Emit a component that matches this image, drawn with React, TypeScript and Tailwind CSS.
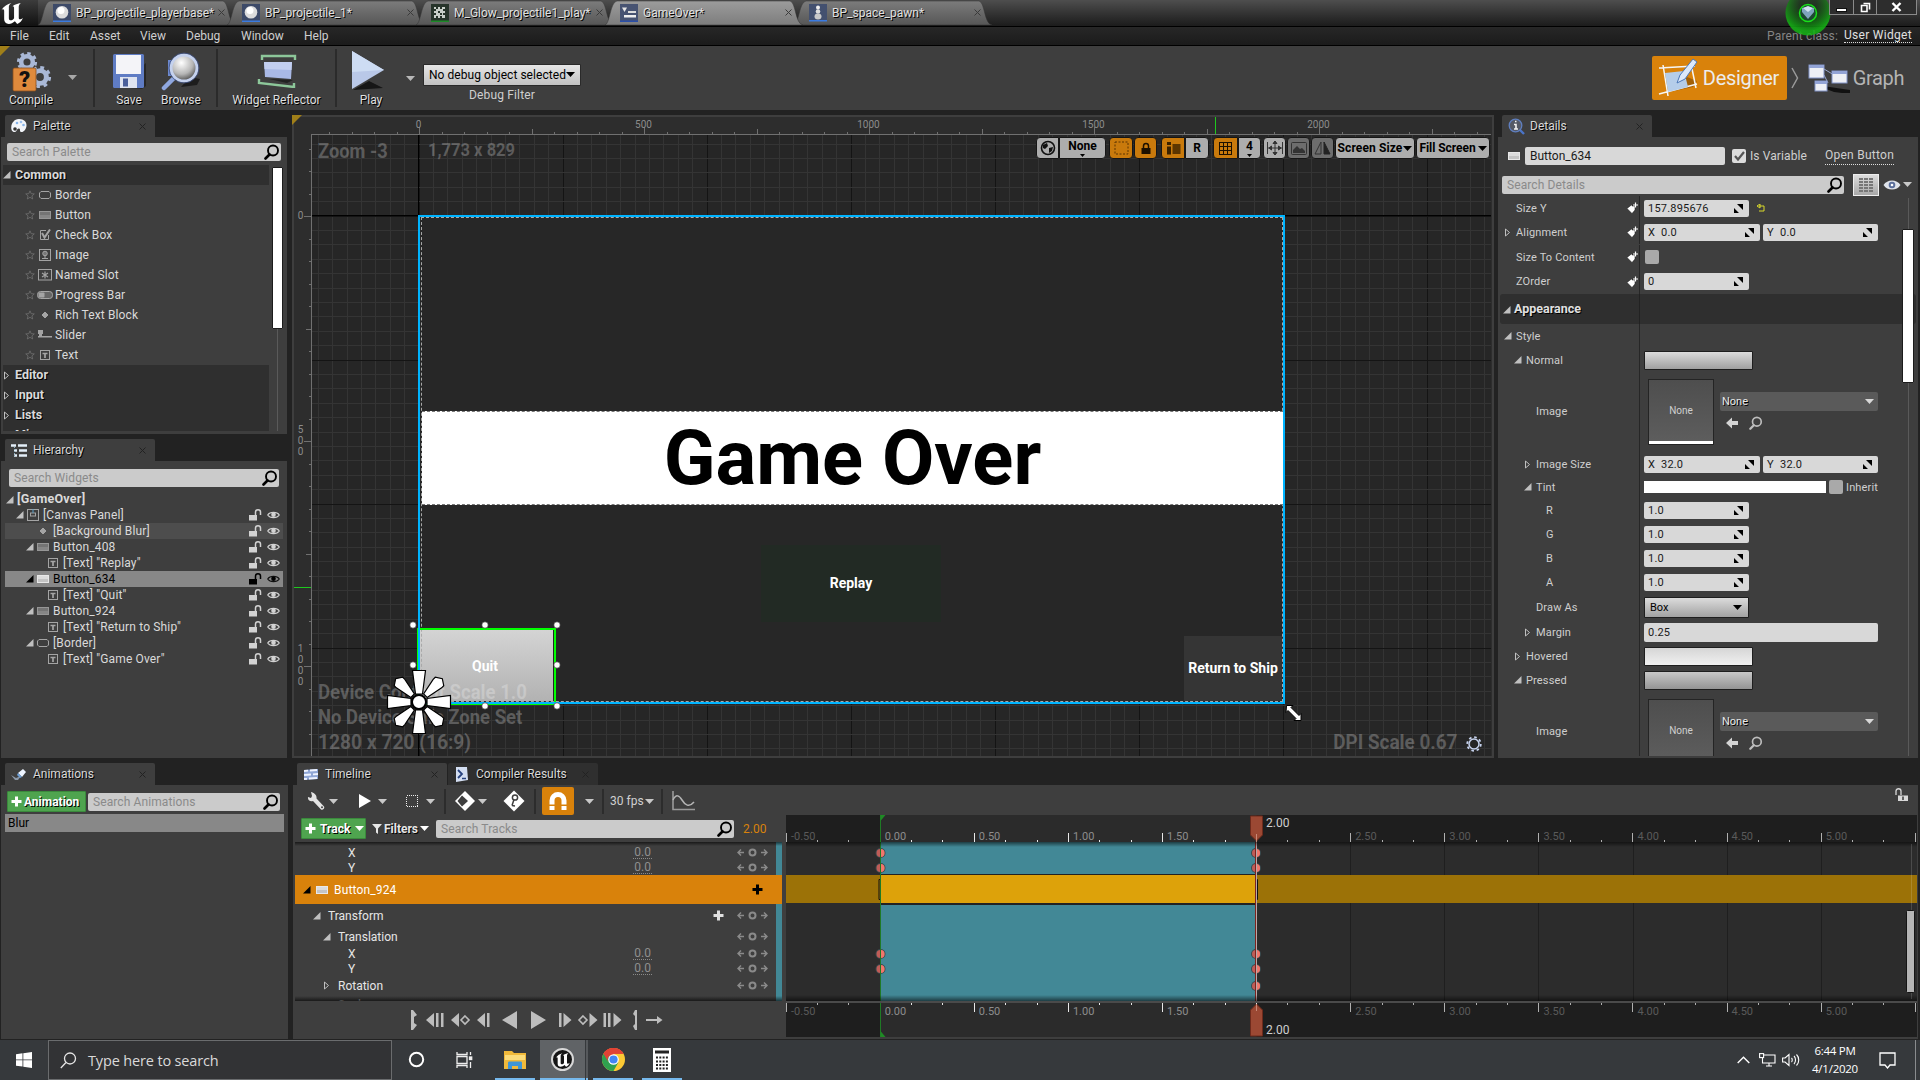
import React from "react";

const SHADOW = "[text-shadow:1px_1px_0_#000]";

function Caret({ className = "text-[#c8c8c8]" }: { className?: string }) {
  return (
    <svg width="9" height="5" viewBox="0 0 9 5" className={"shrink-0 " + className}>
      <path d="M0 0h9L4.5 5z" fill="currentColor" />
    </svg>
  );
}

function Expander({ open, className = "text-[#c0c0c0]" }: { open: boolean; className?: string }) {
  return open ? (
    <svg width="8" height="8" viewBox="0 0 8 8" className={"shrink-0 " + className}>
      <path d="M7.5 0v7.5H0z" fill="currentColor" />
    </svg>
  ) : (
    <svg width="8" height="9" viewBox="0 0 8 9" className={"shrink-0 " + className}>
      <path d="M1.5 1v7L5.500 4.500z" fill="none" stroke="currentColor" />
    </svg>
  );
}

function Magnifier({ size = 16, color = "#000" }: { size?: number; color?: string }) {
  return (
    <svg width={size} height={size} viewBox="0 0 16 16" className="shrink-0">
      <circle cx="9" cy="6.500" r="5" fill="none" stroke={color} strokeWidth="1.900" />
      <path d="M5.500 10.500L1.500 14.500" stroke={color} strokeWidth="2.600" strokeLinecap="round" />
    </svg>
  );
}

function SearchBox({ text, className }: { text: string; className: string }) {
  return (
    <div className={"flex h-[18px] items-center justify-between rounded-[2px] bg-[#cbcbcb] pl-[5px] pr-px text-[12px] leading-none text-[#8a8a8a] " + className}>
      <span className="tracking-[0.1px]">{text}</span>
      <Magnifier />
    </div>
  );
}

function PanelTab({ icon, label, width = "w-[150px]", bg = "bg-[#3e3e3e]" }: { icon: React.ReactNode; label: string; width?: string; bg?: string }) {
  return (
    <div className={"flex h-[22px] items-center rounded-t-[2px] pl-[6px] pr-[9px] text-[12px] leading-none text-[#d8d8d8] " + width + " " + bg}>
      <span className="flex w-[22px] items-center">{icon}</span>
      <span className={"flex-1 " + SHADOW}>{label}</span>
      <svg width="7" height="7" viewBox="0 0 7 7">
        <path d="M.5.5l6 6M6.500.5l-6 6" stroke="#222" />
      </svg>
    </div>
  );
}

/* ---------- widget type glyphs ---------- */

function WidgetGlyph({ kind, light = false }: { kind: string; light?: boolean }) {
  const c = "#a4a4a4";
  const box = (child: React.ReactNode) => (
    <svg width="16" height="12" viewBox="0 0 16 12" className="shrink-0">
      {child}
    </svg>
  );
  switch (kind) {
    case "border":
      return box(<path d="M4 2.500h8l1.500 1.500v4L12 9.500H4L2.500 8V4z" fill="none" stroke={c} />);
    case "button":
      return box(
        <>
          <rect x="2.500" y="2.500" width="11" height="7" fill={light ? "#c4c4c4" : "#868686"} stroke={light ? "#e8e8e8" : "#969696"} />
          <rect x="3" y="3" width="10" height="3" fill={light ? "#dcdcdc" : "#747474"} />
        </>
      );
    case "check":
      return box(
        <>
          <path d="M9 1.500H3.500v9h8V6" fill="none" stroke={c} />
          <path d="M5 4l2.500 4.500L13 0.500" fill="none" stroke={c} strokeWidth="2" />
        </>
      );
    case "image":
      return box(
        <>
          <rect x="2.500" y="0.500" width="11" height="11" fill="none" stroke={c} />
          <circle cx="8" cy="4.500" r="2.300" fill="#777" stroke={c} />
          <path d="M8 6v3M5 9.500h6" stroke={c} />
        </>
      );
    case "slot":
      return box(
        <>
          <rect x="1.500" y="0.500" width="13" height="10.500" fill="none" stroke={c} />
          <path d="M8 2.500v7M5 4l6 4M11 4l-6 4" stroke={c} strokeWidth="1.200" />
        </>
      );
    case "progress":
      return box(
        <>
          <rect x="0.500" y="2.500" width="15" height="7" rx="3" fill="#666" stroke={c} />
          <rect x="1.500" y="3.500" width="6" height="5" rx="1" fill={c} />
        </>
      );
    case "dot":
      return box(<path d="M7 3h2v1h1v1h1v2h-1v1H9v1H7V8H6V7H5V5h1V4h1z" fill={c} />);
    case "slider":
      return box(<path d="M1 1h5v4H5v2h10v1.500H1V7h1V5H1z" fill={c} />);
    case "canvas":
      return box(
        <>
          <rect x="2.500" y="0.500" width="11" height="11" fill="none" stroke={c} />
          <rect x="5.500" y="4" width="5" height="3" fill="none" stroke={c} />
          <path d="M8 0v4" stroke="#5aa0c8" />
        </>
      );
    default:
      return box(
        <>
          <rect x="3.500" y="1.500" width="9" height="9" fill="none" stroke={c} />
          <path d="M5.500 4.500h5M8 4.500v4.500" stroke={c} strokeWidth="1.700" />
        </>
      );
  }
}

/* ---------- title bar ---------- */

function BlueprintIcon() {
  return (
    <svg width="18" height="18" viewBox="0 0 18 18" className="shrink-0">
      <rect width="18" height="17" fill="#3d4a68" />
      <circle cx="9" cy="8.300" r="6.300" fill="#dcdcdc" />
      <circle cx="8" cy="6.500" r="3.500" fill="#fff" />
      <rect y="16.500" width="18" height="1.500" fill="#3b7be0" />
    </svg>
  );
}

function MaterialIcon() {
  return (
    <svg width="18" height="18" viewBox="0 0 18 18" className="shrink-0">
      <rect width="18" height="17" fill="#27342a" />
      <path d="M3 3h2v2h2V3h2v2h2V3h3v2h-2v2h2v2h-2v2h2v3h-3v-2H9v2H7v-2H5v2H3v-3h2V9H3V7h2V5H3zM7 7v2h2V7zm2 2v2h2V9z" fill="#c9cfc9" />
      <rect y="16.500" width="18" height="1.500" fill="#1d8a28" />
    </svg>
  );
}

function WidgetIcon() {
  return (
    <svg width="18" height="18" viewBox="0 0 18 18" className="shrink-0">
      <rect width="18" height="17" fill="#475372" />
      <path d="M2 3.500h5L4.500 8z" fill="#e5e5e5" />
      <rect x="8" y="7" width="8" height="2" fill="#ddd" />
      <rect x="4" y="11" width="12" height="2.500" fill="#eee" />
      <rect y="16.500" width="18" height="1.500" fill="#2b4fa8" />
    </svg>
  );
}

function PawnIcon() {
  return (
    <svg width="18" height="18" viewBox="0 0 18 18" className="shrink-0">
      <rect width="18" height="17" fill="#43506f" />
      <circle cx="9" cy="3.500" r="2" fill="#eee" />
      <circle cx="9" cy="7.500" r="2.300" fill="#ddd" />
      <ellipse cx="9" cy="12.500" rx="3.500" ry="3" fill="#c9c9c9" />
      <rect y="16" width="18" height="1.500" fill="#3b7be0" />
    </svg>
  );
}

function EditorTab({ icon, label, active, first }: { icon: React.ReactNode; label: string; active?: boolean; first?: boolean }) {
  return (
    <div className={"relative h-[25px] w-[198px] shrink-0 " + (first ? "" : "-ml-[9px] ") + (active ? "z-[5]" : "z-[1]")}>
      <svg className="absolute inset-0" width="198" height="25">
        <defs>
          <linearGradient id={active ? "tabA" : "tabN"} x1="0" y1="0" x2="0" y2="1">
            <stop offset="0" stopColor={active ? "#9c9c9c" : "#7c7c7c"} />
            <stop offset="1" stopColor={active ? "#7d7d7d" : "#565656"} />
          </linearGradient>
        </defs>
        <path
          d="M0 25C5 24 5 2 12 1H185C191 2 190 24 198 25z"
          fill={active ? "url(#tabA)" : "url(#tabN)"}
          stroke="#333"
          strokeWidth="0.500"
        />
      </svg>
      <div className="relative flex h-full items-center pl-[15px] pr-[11px] text-[12px] leading-none text-[#e0e0e0]">
        {icon}
        <span className={"ml-[5px] flex-1 whitespace-nowrap " + SHADOW}>{label}</span>
        <svg width="7" height="7" viewBox="0 0 7 7" className="shrink-0">
          <path d="M.5.5l6 6M6.500.5l-6 6" stroke="#3a3a3a" />
        </svg>
      </div>
    </div>
  );
}

function UnrealU({ size }: { size: number }) {
  return (
    <svg width={size} height={size} viewBox="0 0 24 24">
      <path
        d="M1 9C4 5 7 3 11 2 9 3.500 8.500 4.500 8.500 6v10.500c0 1.500 1 2 2 2s2.500-1 3-2V6.500c0-1-.5-1.500-1.500-1.500C14 3.500 17 2.500 20 2c-1.500 1.500-2 2.500-2 4v10c0 1 .5 1.500 1.200 1.500.8 0 1.800-.6 2.800-1.500-1 3-3 5-5.500 6l-2.200-2.500C12.500 21 10.500 22 8.500 22 5.500 22 4 20 4 17.500V9.500C4 8.500 3.500 8 2.800 8 2.200 8 1.600 8.300 1 9z"
        fill="#fff"
      />
    </svg>
  );
}

function TitleBar() {
  return (
    <header className="relative flex h-[26px] shrink-0 bg-linear-to-b from-[#4e4e4e] to-[#1c1c1c]">
      <div className="w-[38px] bg-linear-to-b from-[#3c3c3c] to-[#111] pt-[1px]">
        <UnrealU size={25} />
      </div>
      <EditorTab first icon={<BlueprintIcon />} label="BP_projectile_playerbase*" />
      <EditorTab icon={<BlueprintIcon />} label="BP_projectile_1*" />
      <EditorTab icon={<MaterialIcon />} label="M_Glow_projectile1_play*" />
      <EditorTab icon={<WidgetIcon />} label="GameOver*" active />
      <EditorTab icon={<PawnIcon />} label="BP_space_pawn*" />
      <div className="flex-1" />
      <svg width="46" height="44" viewBox="0 0 46 44" className="absolute left-[1785px] top-0 z-10">
        <defs>
          <radialGradient id="glow" cx="0.500" cy="0.300" r="0.600">
            <stop offset="0.300" stopColor="#0a2a0a" stopOpacity="0.600" />
            <stop offset="1" stopColor="#14b414" stopOpacity="0.850" />
          </radialGradient>
        </defs>
        <ellipse cx="23" cy="13" rx="22.500" ry="22.500" fill="url(#glow)" />
        <circle cx="23" cy="13" r="8.500" fill="#1c4a30" stroke="#18e018" strokeWidth="1.500" />
        <path d="M17 8l6-1 6 1v4l-6 7-6-7z" fill="#7fa3bd" />
        <path d="M18 8l5 4 5-4-5-2z" fill="#cfe0ee" />
      </svg>
      <div className="z-10 mr-[3px] flex h-[15px] text-white">
        <div className="flex w-[25px] items-end justify-center border border-t-0 border-[#8a8a8a] bg-[#2d2d2d] pb-[2px]">
          <div className="h-[4px] w-[11px] border border-[#111] bg-white" />
        </div>
        <div className="flex w-[23px] items-center justify-center border-b border-r border-[#8a8a8a] bg-[#2d2d2d]">
          <svg width="11" height="11" viewBox="0 0 11 11">
            <path d="M3.500 1.500h6v6M1.500 3.500h5.500v6H1.500z" fill="none" stroke="#fff" strokeWidth="1.600" />
          </svg>
        </div>
        <div className="flex w-[40px] items-center justify-center border-b border-r border-[#8a8a8a] bg-[#2d2d2d]">
          <svg width="11" height="10" viewBox="0 0 11 10">
            <path d="M1.500 1l8 8M9.500 1l-8 8" stroke="#fff" strokeWidth="2.400" />
          </svg>
        </div>
      </div>
    </header>
  );
}

function MenuBar() {
  return (
    <nav className="flex h-[20px] shrink-0 items-center border-y border-black bg-linear-to-b from-[#272727] to-[#1b1b1b] pl-[10px] pr-[8px] text-[12px] leading-none text-[#cfcfcf]">
      <span className="w-[39px]">File</span>
      <span className="w-[41px]">Edit</span>
      <span className="w-[50px]">Asset</span>
      <span className="w-[46px]">View</span>
      <span className="w-[55px]">Debug</span>
      <span className="w-[63px]">Window</span>
      <span>Help</span>
      <div className="flex-1" />
      <span className="mr-[6px] tracking-[0.150px] text-[#858585]">Parent class:</span>
      <span className="border-b border-dotted border-[#ddd] pb-px tracking-[0.300px] text-[#e0e0e0]">User Widget</span>
    </nav>
  );
}

/* ---------- toolbar ---------- */

function ToolButton({ label, width, children }: { label: string; width: string; children: React.ReactNode }) {
  return (
    <div className={"flex flex-col items-center " + width}>
      <div className="flex h-[42px] items-center">{children}</div>
      <span className={"mt-[1px] whitespace-nowrap text-[12px] leading-[14px] text-[#dedede] " + SHADOW}>{label}</span>
    </div>
  );
}

function Divider() {
  return <div className="h-[58px] w-[2px] bg-[#2b2b2b]" />;
}

function Gear({ cx, cy, r }: { cx: number; cy: number; r: number }) {
  return (
    <g transform={`translate(${cx} ${cy})`}>
      <circle r={r * 0.58} fill="none" stroke="#a9b8d6" strokeWidth={r * 0.45} />
      <circle r={r * 0.86} fill="none" stroke="#a9b8d6" strokeWidth={r * 0.3} strokeDasharray={`${r * 0.34} ${r * 0.335}`} />
    </g>
  );
}

function Toolbar() {
  return (
    <div className="flex h-[64px] shrink-0 items-center bg-[#3e3e3e]">
      <div className="relative flex h-full items-center">
        <svg width="10" height="10" className="absolute left-0 top-0">
          <path d="M0 0h10L0 10z" fill="#a07f19" />
        </svg>
        <ToolButton label="Compile" width="w-[62px]">
          <svg width="42" height="42" viewBox="0 0 42 42">
            <Gear cx={17} cy={12} r={10} />
            <Gear cx={30} cy={27} r={11} />
            <rect x="3" y="18" width="23" height="23" rx="1.500" fill="#df8a3c" stroke="#8a4f1c" strokeWidth="0.800" />
            <text x="14.500" y="37" textAnchor="middle" fontFamily="Roboto" fontWeight="900" fontSize="22" fill="#111">?</text>
          </svg>
        </ToolButton>
        <div className="flex w-[31px] pb-0.5 pl-[6px]">
          <Caret className="text-[#a8a8a8]" />
        </div>
        <Divider />
        <ToolButton label="Save" width="ml-[8px] w-[52px]">
          <svg width="38" height="40" viewBox="0 0 38 40">
            <path d="M6 36l26 2 4-3V12z" fill="#222" opacity="0.800" />
            <rect x="3" y="3" width="31" height="34" rx="1.500" fill="#5f7cc4" />
            <rect x="6" y="4" width="25" height="19" fill="#f4f4f8" />
            <rect x="10" y="26" width="17" height="11" fill="#dfe4f0" />
            <rect x="13" y="27.500" width="5" height="8" fill="#4a5f9a" />
          </svg>
        </ToolButton>
        <ToolButton label="Browse" width="w-[52px]">
          <svg width="40" height="40" viewBox="0 0 40 40">
            <defs>
              <radialGradient id="lens" cx="0.400" cy="0.300" r="0.800">
                <stop offset="0" stopColor="#fff" />
                <stop offset="0.550" stopColor="#b5b5b5" />
                <stop offset="1" stopColor="#2c2c2c" />
              </radialGradient>
            </defs>
            <path d="M20 36l16-2 3-6-10-2z" fill="#1d1d1d" />
            <path d="M14 26L3 37" stroke="#8fa7df" strokeWidth="4.500" strokeLinecap="round" />
            <rect x="7" y="9" width="5" height="16" fill="#6d89cf" />
            <circle cx="23" cy="17" r="13" fill="url(#lens)" stroke="#c5d2ee" strokeWidth="3" />
            <circle cx="23" cy="17" r="15" fill="none" stroke="#3d4f80" strokeWidth="0.800" />
          </svg>
        </ToolButton>
        <div className="ml-[9px]"><Divider /></div>
        <ToolButton label="Widget Reflector" width="w-[117px]">
          <svg width="40" height="34" viewBox="0 0 40 34">
            <path d="M5 6V2h33v4" fill="none" stroke="#8dc79a" strokeWidth="2.400" />
            <path d="M7 8h28l-1 17-26-2z" fill="#a9b9e6" />
            <path d="M7 8h28l-.5 8L7.500 15z" fill="#c3cff0" />
            <path d="M2 25v4l35 4v-4" fill="none" stroke="#8dc79a" strokeWidth="2.400" />
            <path d="M12 25l24 1-6 3z" fill="#222" />
          </svg>
        </ToolButton>
        <Divider />
        <ToolButton label="Play" width="w-[68px]">
          <svg width="40" height="42" viewBox="0 0 40 42" className="-ml-[6px]">
            <path d="M5 40l16-9 14 7z" fill="#161616" />
            <path d="M4 1l32 19L4 39z" fill="#b9c8e8" />
            <path d="M4 1l32 19-32 2z" fill="#cddcf3" />
          </svg>
        </ToolButton>
        <div className="flex w-[10px] justify-center">
          <Caret className="text-[#b8b8b8]" />
        </div>
        <div className="ml-[8px] mt-[9px] flex w-[158px] flex-col items-center">
          <div className="flex h-[22px] w-full items-center justify-between rounded-[1px] border border-[#2a2a2a] bg-linear-to-b from-[#e6e6e6] to-[#c2c2c2] px-[5px] text-[12px] leading-none text-black">
            <span className="tracking-[0.050px]">No debug object selected</span>
            <Caret className="text-black" />
          </div>
          <span className="mt-[2px] text-[12px] leading-[14px] tracking-[0.150px] text-[#cfcfcf]">Debug Filter</span>
        </div>
      </div>
      <div className="flex-1" />
      <div className="flex h-[44px] w-[135px] items-center rounded-[2px] bg-[#d9820b] pl-[5px]">
        <svg width="42" height="42" viewBox="0 0 42 42" className="mr-[4px]">
          <path d="M12 35l24-5 4-6-10-4z" fill="#8a5208" opacity="0.700" />
          <path d="M2 11l36-2M6 8l5 31M2 37l38-10M34 7l5 24" stroke="#f6f6f6" strokeWidth="1.500" fill="none" />
          <path d="M8 16l19-2 4 16-20 5z" fill="#b5cdea" />
          <path d="M20 26l3-8L36 2l4 3-12 17z" fill="#dce8fa" stroke="#4b77b8" />
        </svg>
        <span className="text-[20px] leading-none tracking-[-0.300px] text-[#ececec]">Designer</span>
      </div>
      <svg width="9" height="22" viewBox="0 0 9 22" className="ml-[4px]">
        <path d="M1 1l5.500 10L1 21" fill="none" stroke="#9a9a9a" strokeWidth="1.500" />
      </svg>
      <svg width="42" height="30" viewBox="0 0 42 30" className="ml-[8px]">
        <path d="M8 22l34 5v4l-16-2z" fill="#111" />
        <path d="M16 6l10 6M16 12l4 8" stroke="#9aa8cf" />
        <rect x="1" y="2" width="15" height="13" fill="#eef0f5" stroke="#8294c8" />
        <rect x="1" y="2" width="15" height="3" fill="#93a4d6" />
        <rect x="24" y="8" width="15" height="12" fill="#eef0f5" stroke="#8294c8" />
        <rect x="24" y="8" width="15" height="3" fill="#93a4d6" />
        <rect x="7" y="18" width="12" height="10" fill="#eef0f5" stroke="#8294c8" />
        <rect x="7" y="18" width="12" height="3" fill="#93a4d6" />
      </svg>
      <span className="ml-[3px] mr-[16px] text-[20px] leading-none tracking-[-0.400px] text-[#b4b4b4]">Graph</span>
    </div>
  );
}

/* ---------- left column ---------- */

const PALETTE: [string, string][] = [
  ["border", "Border"],
  ["button", "Button"],
  ["check", "Check Box"],
  ["image", "Image"],
  ["slot", "Named Slot"],
  ["progress", "Progress Bar"],
  ["dot", "Rich Text Block"],
  ["slider", "Slider"],
  ["text", "Text"],
];

function PalettePanel() {
  return (
    <section>
      <div className="pl-[4px]">
        <PanelTab
          label="Palette"
          icon={
            <svg width="16" height="14" viewBox="0 0 16 14">
              <path d="M8 0c5 0 8 3 7.500 7S12 13.500 10 13c-2-.4 0-3-2-3.500S6 13 3.500 13 0 10.500.3 7.500 3 0 8 0z" fill="#f2f5fa" />
              <circle cx="6" cy="4" r="1.300" fill="#86b4ea" />
              <circle cx="10" cy="3" r="1.300" fill="#9cc0ee" />
              <circle cx="12.500" cy="6" r="1.300" fill="#86b4ea" />
              <circle cx="4" cy="10" r="1.800" fill="#333" />
            </svg>
          }
        />
      </div>
      <div className="h-[297px] bg-[#3e3e3e] pt-[6px]">
        <SearchBox text="Search Palette" className="ml-[6px] w-[274px]" />
        <div className="mt-[4px] flex h-[266px] overflow-hidden pl-[2px]">
          <div className="w-[266px] text-[12px] leading-none text-[#dadada]">
            <div className={"flex h-[20px] items-center gap-[4px] bg-[#2f2f2f] text-[12.500px] font-bold " + SHADOW}>
              <Expander open />
              Common
            </div>
            {PALETTE.map(([k, t]) => (
              <div key={t} className="flex h-[20px] items-center pl-[22px]">
                <svg width="10" height="10" viewBox="0 0 10 10" className="mr-[2px]">
                  <path d="M5 .8l1.200 2.900 3.100.2-2.400 2 .8 3.100L5 7.300 2.300 9l.8-3.100-2.400-2 3.100-.2z" fill="none" stroke="#6b6b6b" strokeWidth="0.900" />
                </svg>
                <WidgetGlyph kind={k} />
                <span className="ml-[2px] tracking-[0.120px]">{t}</span>
              </div>
            ))}
            {["Editor", "Input", "Lists", "Misc"].map((t) => (
              <div key={t} className={"flex h-[20px] items-center gap-[4px] bg-[#2f2f2f] text-[12.500px] font-bold " + SHADOW}>
                <Expander open={false} />
                {t}
              </div>
            ))}
          </div>
          <div className="ml-[2px] mt-[2px] flex w-[12px] flex-col items-center">
            <div className="h-[162px] w-[11px] shrink-0 rounded-[1px] border border-[#1c1c1c] bg-white" />
            <div className="w-px flex-1 bg-[#5a5a5a]" />
          </div>
        </div>
      </div>
    </section>
  );
}

type TreeRow = { t: string; k: string; indent: string; exp?: boolean; bg?: string; sel?: boolean };

const TREE: TreeRow[] = [
  { t: "[Canvas Panel]", k: "canvas", indent: "pl-[11px]", exp: true },
  { t: "[Background Blur]", k: "dot", indent: "pl-[21px]", bg: "bg-[#4d4d4d]" },
  { t: "Button_408", k: "button", indent: "pl-[21px]", exp: true },
  { t: "[Text] \"Replay\"", k: "text", indent: "pl-[31px]" },
  { t: "Button_634", k: "button", indent: "pl-[21px]", exp: true, bg: "bg-[#888]", sel: true },
  { t: "[Text] \"Quit\"", k: "text", indent: "pl-[31px]" },
  { t: "Button_924", k: "button", indent: "pl-[21px]", exp: true },
  { t: "[Text] \"Return to Ship\"", k: "text", indent: "pl-[31px]" },
  { t: "[Border]", k: "border", indent: "pl-[21px]", exp: true },
  { t: "[Text] \"Game Over\"", k: "text", indent: "pl-[31px]" },
];

function HierarchyPanel() {
  return (
    <section className="mt-[5px]">
      <div className="pl-[4px]">
        <PanelTab
          label="Hierarchy"
          icon={
            <svg width="16" height="13" viewBox="0 0 16 13">
              <path d="M0 1.500h5M7 1.500h9M3 6.500h3M8 6.500h8M3 11.500h3M8 11.500h8" stroke="#e3eef8" strokeWidth="2.400" />
              <path d="M3.500 3v10" stroke="#8ab" strokeDasharray="1 1" />
            </svg>
          }
        />
      </div>
      <div className="h-[297px] bg-[#3e3e3e] pt-[8px]">
        <SearchBox text="Search Widgets" className="ml-[8px] w-[270px]" />
        <div className="ml-[4px] mt-[4px] w-[278px] text-[12px] leading-none text-[#dadada]">
          <div className="flex h-[16px] items-center pl-px pt-[1px] text-[12.500px] font-bold">
            <Expander open />
            <span className="ml-[3px] tracking-[0.250px]">[GameOver]</span>
          </div>
          {TREE.map((r) => (
            <div key={r.t} className={"flex h-[16px] items-center pr-[3px] " + r.indent + " " + (r.bg ?? "") + " " + (r.sel ? "text-black" : "")}>
              <span className="flex w-[9px]">{r.exp && <Expander open className={r.sel ? "text-black" : "text-[#c0c0c0]"} />}</span>
              <WidgetGlyph kind={r.k} light={r.sel} />
              <span className="ml-[2px] flex-1 whitespace-nowrap tracking-[0.150px]">{r.t}</span>
              <svg width="13" height="12" viewBox="0 0 13 12" className="mr-[5px]">
                <path d="M0 6h8v5.500H0z" fill={r.sel ? "#000" : "#d2d2d2"} />
                <path d="M6.500 6V3c0-3 5-3 5 0v3" fill="none" stroke={r.sel ? "#000" : "#d2d2d2"} strokeWidth="1.500" />
              </svg>
              <svg width="13" height="10" viewBox="0 0 13 10">
                <path d="M.7 5C3 1.500 10 1.500 12.300 5 10 8.500 3 8.500.7 5z" fill="none" stroke={r.sel ? "#111" : "#d2d2d2"} strokeWidth="1.100" />
                <circle cx="6.500" cy="4.800" r="2.300" fill={r.sel ? "#000" : "#d2d2d2"} />
              </svg>
            </div>
          ))}
        </div>
      </div>
    </section>
  );
}

function GreenButton({ label, className, caret }: { label: string; className: string; caret?: boolean }) {
  return (
    <div className={"flex h-[21px] items-center rounded-[1px] border border-[#3a8a3c] bg-[#4fa44f] pl-[3px] text-[12px] font-bold leading-none text-white " + className}>
      <svg width="11" height="11" viewBox="0 0 11 11" className="shrink-0">
        <path d="M4 0.500h3V4h3.500v3H7v3.500H4V7H.5V4H4z" fill="#fff" />
      </svg>
      <span className={"whitespace-nowrap " + (caret ? "ml-[4px] mr-[5px] " : "ml-[2px] ") + SHADOW}>{label}</span>
      {caret && <Caret className="text-white" />}
    </div>
  );
}

function AnimationsPanel() {
  return (
    <section className="mt-[5px]">
      <div className="pl-[4px]">
        <PanelTab
          label="Animations"
          icon={
            <svg width="17" height="13" viewBox="0 0 17 13">
              <path d="M0 7l5 3 5-2-3 4H4z" fill="#8b98a8" />
              <path d="M7 5l5-4 3 3-4 5z" fill="#eef5ff" />
              <path d="M7 5l4 4-2 1-3-3z" fill="#6fa0d8" />
            </svg>
          }
        />
      </div>
      <div className="h-[254px] w-[287px] bg-[#3e3e3e] pl-[6px] pt-[6px]">
        <div className="flex items-center gap-[2px]">
          <GreenButton label="Animation" className="w-[79px]" />
          <SearchBox text="Search Animations" className="w-[192px]" />
        </div>
        <div className="-ml-[2px] mt-[2px] flex h-[18px] w-[279px] items-center bg-[#888] pl-[3px] text-[12px] leading-none text-black">Blur</div>
      </div>
    </section>
  );
}

/* ---------- designer ---------- */

const S = 0.45;
const OX = 107;
const OY = 81;

function range(a: number, b: number) {
  return Array.from({ length: b - a + 1 }, (_, i) => a + i);
}

function Grid() {
  return (
    <svg width="1179" height="621" className="absolute inset-0" shapeRendering="crispEdges">
      <rect width="1179" height="621" fill="#262626" />
      {range(-7, 74).map((i) => {
        const x = Math.floor(OX + i * 14.4);
        return <rect key={i} x={x} y="0" width="1" height="621" fill={i % 10 ? "#343434" : "#141414"} />;
      })}
      {range(-5, 37).map((i) => {
        const y = Math.floor(OY + i * 14.4);
        return <rect key={i} x="0" y={y} width="1179" height="1" fill={i % 10 ? "#343434" : "#141414"} />;
      })}
      <rect x={OX - 1} y="0" width="1" height="621" fill="#000" />
      <rect x="0" y={OY - 1} width="1179" height="1" fill="#000" />
    </svg>
  );
}

function TopRuler() {
  return (
    <svg width="1197" height="18" className="block" shapeRendering="crispEdges" fontFamily="Roboto" fontSize="10">
      <rect width="1197" height="18" fill="#2d2d2d" />
      <rect x="17" y="17" width="1180" height="1" fill="#707070" />
      {range(-4, 47).map((i) => {
        const x = Math.round(125 + i * 22.5);
        const h = i % 10 === 0 ? 7 : i % 5 === 0 ? 5 : 2;
        return x > 18 && <rect key={i} x={x} y={17 - h} width="1" height={h} fill="#707070" />;
      })}
      {[0, 500, 1000, 1500, 2000].map((v) => (
        <text key={v} x={124.5 + v * S} y="11" textAnchor="middle" fill="#8c8c8c">{v}</text>
      ))}
      <rect x="921" y="0" width="1" height="17" fill="#1ec81e" />
    </svg>
  );
}

function LeftRuler() {
  return (
    <svg width="18" height="621" className="block shrink-0" shapeRendering="crispEdges" fontFamily="Roboto" fontSize="10">
      <rect width="18" height="621" fill="#2d2d2d" />
      <rect x="17" y="0" width="1" height="621" fill="#707070" />
      {range(-3, 23).map((i) => {
        const y = Math.round(OY + i * 22.5);
        const h = i % 10 === 0 ? 7 : i % 5 === 0 ? 5 : 2;
        return <rect key={i} x={17 - h} y={y} width={h} height="1" fill="#707070" />;
      })}
      <g fill="#8c8c8c" textAnchor="middle">
        <text x="6.500" y="84">0</text>
        <text x="6.500" y="298">5</text>
        <text x="6.500" y="309">0</text>
        <text x="6.500" y="320">0</text>
        <text x="6.500" y="517">1</text>
        <text x="6.500" y="528">0</text>
        <text x="6.500" y="539">0</text>
        <text x="6.500" y="550">0</text>
      </g>
      <rect x="0" y="452" width="17" height="1" fill="#1ec81e" />
    </svg>
  );
}

function ViewBtn({ children, width, tone }: { children: React.ReactNode; width: string; tone: string }) {
  return (
    <div className={"flex h-[22px] items-center justify-center rounded-[4px] border border-[#161616] text-[12px] font-bold leading-none text-black " + width + " " + tone}>
      {children}
    </div>
  );
}

function ViewToolbar() {
  const gray = "bg-[#adadad]";
  const dim = "bg-[#6d6d6d]";
  const orange = "bg-[#c97a0c]";
  return (
    <div className="absolute right-[1px] top-[2px] flex h-[22px]">
      <ViewBtn width="w-[23px] rounded-r-none" tone={gray}>
        <svg width="16" height="16" viewBox="0 0 16 16">
          <circle cx="8" cy="8" r="6.500" fill="none" stroke="#111" strokeWidth="1.600" />
          <path d="M3 5l4-2 1 3-3 3-2-1zM9 8l4-1-1 4-3 2z" fill="#111" />
        </svg>
      </ViewBtn>
      <ViewBtn width="w-[47px] rounded-l-none flex-col gap-[2px] pt-[1px]" tone={gray}>
        None
        <svg width="5" height="3"><path d="M0 0h5L2.500 3z" /></svg>
      </ViewBtn>
      <ViewBtn width="ml-[3px] w-[24px]" tone={orange}>
        <svg width="15" height="14"><rect x="1" y="1" width="13" height="12" fill="none" stroke="#5c3500" strokeDasharray="2 1.500" /></svg>
      </ViewBtn>
      <ViewBtn width="ml-[1px] w-[23px]" tone={orange}>
        <svg width="12" height="13" viewBox="0 0 12 13">
          <path d="M1.500 6h9v6h-9z" fill="#1c1000" />
          <path d="M3.500 6V4c0-3.500 5-3.500 5 0v2" fill="none" stroke="#1c1000" strokeWidth="1.500" />
        </svg>
      </ViewBtn>
      <ViewBtn width="ml-[4px] w-[24px] rounded-r-none" tone={orange}>
        <svg width="15" height="14" viewBox="0 0 15 14">
          <rect x="1" y="1" width="4" height="3" fill="#3a2200" />
          <rect x="1" y="5.500" width="4" height="8" fill="#3a2200" />
          <rect x="6.500" y="3" width="8" height="10" fill="#5c3500" />
        </svg>
      </ViewBtn>
      <ViewBtn width="w-[24px] rounded-l-none text-[#333]" tone={gray}>R</ViewBtn>
      <ViewBtn width="ml-[4px] w-[25px] rounded-r-none" tone={orange}>
        <svg width="15" height="15" shapeRendering="crispEdges">
          <path d="M1 1.500h13M1 5.500h13M1 9.500h13M1 13.500h13M1.500 1v13M5.500 1v13M9.500 1v13M13.500 1v13" stroke="#1c1000" />
        </svg>
      </ViewBtn>
      <ViewBtn width="w-[23px] rounded-l-none flex-col gap-[2px] pt-[1px]" tone={gray}>
        4
        <svg width="5" height="3"><path d="M0 0h5L2.500 3z" /></svg>
      </ViewBtn>
      <ViewBtn width="ml-[2px] w-[23px]" tone={gray}>
        <svg width="18" height="16" viewBox="0 0 18 16">
          <path d="M9 1v14M2 8h14M9 1L7 3.500h4zM9 15l-2-2.500h4zM1.500 2v12M16.500 2v12M3 8l2.500-2v4zM15 8l-2.500-2v4z" stroke="#333" fill="#333" />
        </svg>
      </ViewBtn>
      <ViewBtn width="ml-[1px] w-[23px]" tone={dim}>
        <svg width="16" height="13" viewBox="0 0 16 13">
          <rect x="0.500" y="0.500" width="15" height="12" rx="1" fill="none" stroke="#333" />
          <path d="M2 11V8l4-4 3 3 2-1 3 3v2z" fill="#333" />
        </svg>
      </ViewBtn>
      <ViewBtn width="ml-[1px] w-[23px]" tone={dim}>
        <svg width="17" height="14" viewBox="0 0 17 14">
          <path d="M7 1v12H1z" fill="none" stroke="#333" />
          <path d="M10 1v12h6z" fill="#222" stroke="#222" />
        </svg>
      </ViewBtn>
      <ViewBtn width="ml-[1px] w-[80px] gap-[1px]" tone={gray}>
        <span className="tracking-[0.100px]">Screen Size</span>
        <Caret className="text-black" />
      </ViewBtn>
      <ViewBtn width="ml-[1px] w-[74px] gap-[2px]" tone={gray}>
        <span className="tracking-[-0.050px] whitespace-nowrap">Fill Screen</span>
        <Caret className="text-black" />
      </ViewBtn>
    </div>
  );
}

function Handle({ x, y }: { x: number; y: number }) {
  return <circle cx={x} cy={y} r="3.200" fill="#fff" stroke="#222" strokeWidth="0.600" />;
}

function Designer() {
  const info = "absolute whitespace-nowrap font-bold leading-none text-white/25";
  return (
    <section className="relative h-[643px] w-[1202px] border-2 border-[#3e3e3e] bg-[#2d2d2d]">
      <svg width="10" height="10" className="absolute -left-[2px] -top-[2px] z-10">
        <path d="M0 0h10L0 10z" fill="#a07f19" />
      </svg>
      <TopRuler />
      <div className="flex">
        <LeftRuler />
        <div className="relative h-[621px] w-[1179px] overflow-hidden">
          <Grid />
          <div className="absolute left-[106px] top-[80px] h-[489px] w-[867px] border-[2px] border-[#00b4ff] bg-[#272727]">
            <div className="absolute left-[341px] top-[328px] flex h-[77px] w-[180px] items-center justify-center bg-[#222a24] pb-[2px] text-[14px] font-bold leading-none text-white">Replay</div>
            <div className="absolute left-[764px] top-[419px] flex h-[65px] w-[98px] items-center justify-center bg-[#353535] pb-[2px] text-[14px] font-bold leading-none whitespace-nowrap text-white">Return to Ship</div>
            <div className="absolute left-0 top-[413px] flex h-[71px] w-[133px] items-center justify-center bg-linear-to-b from-[#d4d4d4] to-[#b2b2b2] pr-[3px] text-[14px] font-bold leading-none text-white">Quit</div>
            <div className="absolute bottom-0 left-[1px] right-0 top-0 border border-dashed border-[#a8a8a8]" />
            <div className="absolute left-[2px] top-[194px] flex h-[94px] w-[861px] items-center justify-center border-y border-dashed border-[#777] bg-white text-[76px] font-bold leading-none text-black">
              Game Over
            </div>
          </div>
          <svg width="1179" height="621" className="absolute inset-0">
            <rect x="106" y="494" width="137" height="75" fill="none" stroke="#0f0" strokeWidth="2" />
            <path d="M107 480v88M107 568h150" stroke="#00b4ff" strokeWidth="2" />
          </svg>
          <span className={info + " left-[6px] top-[6px] origin-left scale-x-[0.915] text-[20px]"}>Zoom -3</span>
          <span className={info + " left-[116px] top-[5px] origin-left scale-x-[0.870] text-[19px]"}>1,773 x 829</span>
          <span className={info + " left-[6px] top-[547px] origin-left scale-x-[0.930] text-[20px]"}>Device Content Scale 1.0</span>
          <span className={info + " left-[6px] top-[572px] origin-left scale-x-[0.922] text-[20px]"}>No Device Safe Zone Set</span>
          <span className={info + " left-[6px] top-[597px] origin-left scale-x-[0.960] text-[20px]"}>1280 x 720 (16:9)</span>
          <span className={info + " right-[34px] top-[597px] origin-right scale-x-[0.945] text-[20px]"}>DPI Scale 0.67</span>
          <svg width="16" height="16" viewBox="0 0 16 16" className="absolute right-[9px] top-[601px]">
            <circle cx="8" cy="8" r="5" fill="none" stroke="#c7d3ee" strokeWidth="1.500" />
            <circle cx="8" cy="8" r="6.800" fill="none" stroke="#c7d3ee" strokeWidth="1.800" strokeDasharray="2.600 2.740" />
          </svg>
          <svg width="1179" height="621" className="absolute inset-0">
            <Handle x={101} y={490} />
            <Handle x={173} y={490} />
            <Handle x={245} y={490} />
            <Handle x={101} y={530} />
            <Handle x={245} y={530} />
            <Handle x={173} y={571} />
            <Handle x={245} y={571} />
            <g transform="translate(107 567)" fill="#fff" stroke="#000" strokeWidth="1.200">
              {[0, 90, 180, 270].map((a) => (
                <path key={a} transform={`rotate(${a})`} d="M-6.500 -31.500h13L3.500 -8h-7z" />
              ))}
              {[45, 135, 225, 315].map((a) => (
                <path key={a} transform={`rotate(${a})`} d="M-6 -26l0 -3 6 -4 6 4 0 3L2.500 -9h-5z" />
              ))}
              <circle r="7" strokeWidth="2" />
            </g>
            <g transform="translate(982 578)">
              <path d="M-7.500 -7.500h6.500l-2 2 8 8 2-2v7h-7l2-2-8-8-2 2z" fill="#fff" stroke="#000" />
            </g>
          </svg>
          <ViewToolbar />
        </div>
      </div>
    </section>
  );
}

/* ---------- details ---------- */

function SpinArrows() {
  return (
    <svg width="9" height="9" viewBox="0 0 9 9" className="shrink-0">
      <path d="M3 0h6v6L7 4 5 2zM0 4l5 5H0z" fill="#000" />
    </svg>
  );
}

function NumField({ axis, value, width = "w-[105px]", spin = true, height = "h-[17px]" }: { axis?: string; value: string; width?: string; spin?: boolean; height?: string }) {
  return (
    <div className={"flex items-center rounded-[2px] bg-[#d8d8d8] pl-[4px] pr-[6px] text-[11px] leading-none tracking-[0.200px] text-[#1a1a1a] " + width + " " + height}>
      {axis && <span className="w-[13px]">{axis}</span>}
      <span className="flex-1">{value}</span>
      {spin && <SpinArrows />}
    </div>
  );
}

function Vec({ v }: { v: string }) {
  return (
    <div className="flex gap-[3px]">
      <NumField axis="X" value={v} width="w-[116px]" />
      <NumField axis="Y" value={v} width="w-[115px]" />
    </div>
  );
}

function DRow({ label, height, indent, exp, bind, children }: { label: string; height: string; indent: string; exp?: "open" | "closed"; bind?: boolean; children?: React.ReactNode }) {
  return (
    <div className={"flex shrink-0 " + height}>
      <div className={"flex w-[142px] items-center border-r border-[#262626] text-[11px] leading-none tracking-[0.150px] text-[#cfcfcf] " + indent}>
        <span className="flex w-[12px]">{exp && <Expander open={exp === "open"} />}</span>
        <span className="flex-1">{label}</span>
        {bind && (
          <svg width="11" height="12" viewBox="0 0 11 12" className="mr-[1px]">
            <path d="M0 6.500l5-4v1.500h3v4l-3 3.500z" fill="#fff" stroke="#111" strokeWidth="0.500" />
            <path d="M6 3h5M8.500 .5v5" stroke="#fff" strokeWidth="1.200" />
          </svg>
        )}
      </div>
      <div className="flex items-center pl-[4px]">{children}</div>
    </div>
  );
}

function Swatch({ tone }: { tone: string }) {
  return <div className={"h-[19px] w-[109px] rounded-[1px] border border-[#1e1e1e] bg-linear-to-b " + tone} />;
}

function ImagePicker() {
  return (
    <div className="flex h-[80px]">
      <div className="ml-[4px] mt-[7px] flex h-[66px] w-[66px] items-center justify-center border border-[#242424] bg-linear-to-b from-[#4e4e4e] to-[#5e5e5e] pb-[2px] text-[10px] leading-none text-[#cfcfcf] shadow-[inset_0_-3px_0_#fff]">
        None
      </div>
      <div className="ml-[6px] pt-[20px]">
        <div className="flex h-[19px] w-[158px] items-center justify-between rounded-[2px] bg-[#5a5a5a] pb-px pl-[2px] pr-[4px] text-[11px] leading-none text-[#e8e8e8]">
          <span className={SHADOW}>None</span>
          <Caret className="text-[#d8d8d8]" />
        </div>
        <div className="mt-[5px] flex items-center pl-[6px]">
          <svg width="12" height="12" viewBox="0 0 12 12">
            <path d="M0 6l6-5.500v3.500h6v4H6v3.500z" fill="#d4d4d4" />
          </svg>
          <span className="ml-[11px] flex">
            <Magnifier size={14} color="#bdbdbd" />
          </span>
        </div>
      </div>
    </div>
  );
}

function CheckSquare({ checked }: { checked?: boolean }) {
  return (
    <div className={"flex h-[14px] w-[14px] items-center justify-center rounded-[2px] " + (checked ? "bg-[#dcdcdc]" : "bg-[#a9a9a9]")}>
      {checked && (
        <svg width="11" height="10" viewBox="0 0 11 10">
          <path d="M1 5l3 3.500L10 1" fill="none" stroke="#555" strokeWidth="2.200" />
        </svg>
      )}
    </div>
  );
}

function DetailsPanel() {
  return (
    <section className="w-[420px]">
      <div className="pl-[4px]">
        <PanelTab
          label="Details"
          icon={
            <svg width="17" height="17" viewBox="0 0 17 17">
              <path d="M11 11l5 5" stroke="#4a74c8" strokeWidth="2.400" />
              <circle cx="7.500" cy="7.500" r="6.300" fill="#555a66" stroke="#5f7fc0" strokeWidth="1.300" />
              <path d="M6 6.500h2v4.500M6 11h4M7 3.500h1.500" stroke="#f2f2f2" strokeWidth="1.600" fill="none" />
            </svg>
          }
        />
      </div>
      <div className="flex h-[621px] flex-col overflow-hidden bg-[#3e3e3e]">
        <div className="flex h-[36px] shrink-0 items-center pl-[8px] pt-px text-[12px] leading-none text-[#d0d0d0]">
          <WidgetGlyph kind="button" light />
          <div className="ml-[3px] flex h-[18px] w-[200px] items-center rounded-[2px] bg-[#d8d8d8] pl-[5px] text-[#1a1a1a]">Button_634</div>
          <span className="ml-[7px]"><CheckSquare checked /></span>
          <span className="ml-[4px] w-[75px] tracking-[0.100px]">Is Variable</span>
          <span className="mt-[2px] border-b border-dotted border-[#ddd] pb-[3px] tracking-[0.250px]">Open Button</span>
        </div>
        <div className="flex h-[23px] shrink-0 items-center pl-[4px]">
          <SearchBox text="Search Details" className="w-[342px]" />
          <div className="ml-[9px] flex h-[22px] w-[26px] items-center justify-center border border-[#eee] bg-linear-to-b from-[#dcdcdc] to-[#a8a8a8]">
            <svg width="14" height="14" shapeRendering="crispEdges">
              <path d="M0 1h14M0 4h14M0 7h14M0 10h14M0 13h14" stroke="#777" strokeWidth="2" strokeDasharray="4 1" />
            </svg>
          </div>
          <svg width="18" height="12" viewBox="0 0 18 12" className="ml-[4px]">
            <path d="M.5 6C4 0 14 0 17.500 6 14 12 4 12 .5 6z" fill="#dfe3ea" />
            <circle cx="9" cy="6" r="3.300" fill="#5b6f9c" />
            <circle cx="9" cy="6" r="1.300" fill="#fff" />
          </svg>
          <span className="ml-[2px]"><Caret /></span>
        </div>
        <div className="relative flex flex-1 flex-col overflow-hidden">
          <DRow label="Size Y" height="h-[24px]" indent="pl-[6px]" bind>
            <NumField value="157.895676" />
            <svg width="8" height="8" viewBox="0 0 8 8" className="ml-[8px]">
              <path d="M2 2h5v5H2M0 2l3-2v4z" fill="none" stroke="#d9d92a" />
            </svg>
          </DRow>
          <DRow label="Alignment" height="h-[24px]" indent="pl-[6px]" exp="closed" bind><Vec v="0.0" /></DRow>
          <DRow label="Size To Content" height="h-[25px] pt-px" indent="pl-[6px]" bind><span className="ml-px"><CheckSquare /></span></DRow>
          <DRow label="ZOrder" height="h-[25px]" indent="pl-[6px]" bind><NumField value="0" /></DRow>
          <div className="mx-[2px] flex h-[30px] shrink-0 rounded-[3px] bg-[#2f2f2f]">
            <div className={"flex w-[140px] items-center gap-[3px] border-r border-[#222] pl-[3px] pt-px text-[12.500px] font-bold leading-none text-[#e0e0e0] " + SHADOW}>
              <Expander open />
              Appearance
            </div>
          </div>
          <DRow label="Style" height="h-[24px]" indent="pl-[6px]" exp="open" />
          <DRow label="Normal" height="h-[24px]" indent="pl-[16px]" exp="open"><Swatch tone="from-[#dcdcdc] to-[#a0a0a0]" /></DRow>
          <DRow label="Image" height="h-[80px]" indent="pl-[26px] pb-[2px]"><ImagePicker /></DRow>
          <DRow label="Image Size" height="h-[24px]" indent="pl-[26px]" exp="closed"><Vec v="32.0" /></DRow>
          <DRow label="Tint" height="h-[22px]" indent="pl-[26px]" exp="open">
            <div className="h-[12px] w-[182px] bg-white" />
            <span className="ml-[3px]"><CheckSquare /></span>
            <span className="ml-[3px] text-[11px] leading-none tracking-[0.150px] text-[#d0d0d0]">Inherit</span>
          </DRow>
          {["R", "G", "B", "A"].map((c) => (
            <DRow key={c} label={c} height="h-[24px]" indent="pl-[36px]"><NumField value="1.0" /></DRow>
          ))}
          <DRow label="Draw As" height="h-[26px]" indent="pl-[26px]">
            <div className="flex h-[21px] w-[105px] items-center justify-between rounded-[1px] border border-[#1e1e1e] bg-linear-to-b from-[#dcdcdc] to-[#a2a2a2] pl-[5px] pr-[6px] text-[11px] leading-none text-black">
              Box
              <Caret className="text-black" />
            </div>
          </DRow>
          <DRow label="Margin" height="h-[24px]" indent="pl-[26px]" exp="closed"><NumField value="0.25" width="w-[234px]" height="h-[19px]" spin={false} /></DRow>
          <DRow label="Hovered" height="h-[24px]" indent="pl-[16px]" exp="closed"><Swatch tone="from-[#d6d6d6] to-[#f0f0f0]" /></DRow>
          <DRow label="Pressed" height="h-[24px]" indent="pl-[16px]" exp="open"><Swatch tone="from-[#c8c8c8] to-[#949494]" /></DRow>
          <DRow label="Image" height="h-[80px]" indent="pl-[26px] pb-[2px]"><ImagePicker /></DRow>
          <div className="absolute right-[4px] top-[2px] flex h-[560px] w-[12px] flex-col items-center">
            <div className="h-[31px] w-px bg-[#5a5a5a]" />
            <div className="h-[154px] w-[12px] rounded-[1px] border border-[#1c1c1c] bg-white" />
            <div className="w-px flex-1 bg-[#5a5a5a]" />
          </div>
        </div>
        <div className="h-[2px] shrink-0 bg-[#3e3e3e]" />
      </div>
    </section>
  );
}

/* ---------- timeline ---------- */

function KeyNav() {
  return (
    <svg width="31" height="9" viewBox="0 0 31 9" className="shrink-0">
      <path d="M7 4.500H1.500M4 1.500l-3 3 3 3M24 4.500h5.500M27 1.500l3 3-3 3" fill="none" stroke="#8a8a8a" strokeWidth="1.500" />
      <circle cx="15.500" cy="4.500" r="3" fill="none" stroke="#8a8a8a" strokeWidth="2" />
    </svg>
  );
}

function TrackRow({ label, indent, height, exp, value, plus }: { label: string; indent: string; height: string; exp?: "open" | "closed"; value?: boolean; plus?: boolean }) {
  return (
    <div className={"flex shrink-0 items-center pr-[8px] text-[12px] leading-none text-[#e6e6e6] " + indent + " " + height}>
      <span className="flex w-[15px]">{exp && <Expander open={exp === "open"} />}</span>
      <span className="flex-1">{label}</span>
      {value && <span className="mr-[85px] border-b border-dotted border-[#8a8a8a] px-[1px] text-[#8f8f8f]">0.0</span>}
      {plus && (
        <svg width="11" height="11" viewBox="0 0 11 11" className="mr-[13px]">
          <path d="M4 0.500h3V4h3.500v3H7v3.500H4V7H.5V4H4z" fill="#e0e0e0" />
        </svg>
      )}
      <KeyNav />
    </div>
  );
}

const T0 = 94.2;
const HALF = 94.1;

function TimeRuler({ flip }: { flip?: boolean }) {
  const h = flip ? 34 : 27;
  return (
    <svg width="1131" height={h} className="block" fontFamily="Roboto">
      <rect width="1131" height={h} fill="#1e1e1e" />
      <rect x={T0} width={HALF * 4} height={h} fill="#2b2b2b" />
      {range(-3, 33).map((i) => {
        const x = Math.round(T0 + (i * HALF) / 3 - 0.5);
        const len = i % 3 === 0 ? 9 : 2;
        return <rect key={i} x={x} y={flip ? 0 : h - len} width="1" height={len} fill={i >= 0 && i <= 12 ? "#e8e8e8" : "#b0b0b0"} />;
      })}
      {range(-1, 10).map((i) =>
        i === 4 ? null : (
          <text key={i} x={i < 0 ? 5 : T0 + i * HALF + 4.5} y={flip ? 12 : 25} fontSize="11" fill={i >= 0 && i < 4 ? "#8d8d8d" : "#5a5a5a"}>
            {(i / 2).toFixed(2)}
          </text>
        )
      )}
      <rect x="94" width="1" height={h} fill="#1f7a25" />
      <path d={flip ? `M94.500 ${h}v-6l5 6z` : "M94.500 0h5l-5 6z"} fill="#1f8a25" />
      <path
        d={flip ? `M464.500 ${h - 1}v-26l6-6 6 6v26z` : "M464.500 1h12v19l-6 6-6-6z"}
        fill="#9b4833"
        stroke="#6d2a1c"
      />
      <path d={flip ? "M470.500 1v7" : "M470.500 19v8"} stroke="#c98a78" />
      <text x="480" y={flip ? 31 : 12} fontSize="12" fill="#d0d0d0">2.00</text>
    </svg>
  );
}

function Keys({ x, ys }: { x: number; ys: number[] }) {
  return (
    <>
      {ys.map((y) => (
        <g key={y}>
          <circle cx={x} cy={y} r="5" fill="#3a4a4e" />
          <circle cx={x} cy={y} r="4" fill="#c05c57" />
          <path d={`M${x} ${y - 4}a4 4 0 0 1 0 8z`} fill="#f0776c" />
        </g>
      ))}
    </>
  );
}

function TrackArea() {
  return (
    <svg width="1131" height="159" className="block">
      <defs>
        <linearGradient id="shT" x1="0" y1="0" x2="0" y2="1">
          <stop offset="0" stopColor="#000" stopOpacity="0.550" />
          <stop offset="1" stopColor="#000" stopOpacity="0" />
        </linearGradient>
        <linearGradient id="shB" x1="0" y1="1" x2="0" y2="0">
          <stop offset="0" stopColor="#000" stopOpacity="0.550" />
          <stop offset="1" stopColor="#000" stopOpacity="0" />
        </linearGradient>
      </defs>
      <rect width="1131" height="159" fill="#2c2c2c" />
      {range(5, 10).map((i) => (
        <rect key={i} x={Math.round(T0 + i * HALF - 0.5)} width="1" height="159" fill="#1f1f1f" />
      ))}
      <rect x={T0} width={HALF * 4} height="32" fill="#428896" />
      <rect x={T0} y="63" width={HALF * 4} height="96" fill="#428896" />
      <rect y="33" width="1131" height="28" fill="#9c7207" />
      <rect x={T0} y="32" width={HALF * 4} height="31" fill="#222" />
      <rect x={T0} y="33" width={HALF * 4} height="28" fill="#dda20a" />
      <path d="M95 37.500h-2v20h2M469 37.500h2.500v20h-2.500" fill="none" stroke="#111" />
      <Keys x={94.5} ys={[11, 26, 112, 127]} />
      <Keys x={470} ys={[11, 26, 112, 127, 144]} />
      <rect x="94" width="1" height="159" fill="#1f7a25" />
      <rect x="469" width="1" height="159" fill="#7c2420" />
      <rect x="470" width="1" height="159" fill="#b9a8a8" />
      <rect width="1131" height="5" fill="url(#shT)" />
      <rect y="153" width="1131" height="6" fill="url(#shB)" />
      <rect x="1125" y="2" width="1" height="155" fill="#fff" opacity="0.150" />
      <rect x="1120.500" y="68.500" width="8" height="82" rx="1" fill="#b5b5b5" stroke="#141414" />
    </svg>
  );
}

function Transport() {
  const c = "#bdbdbd";
  return (
    <svg width="487" height="36" viewBox="295 1001 487 36" className="block" fill={c}>
      <path d="M411 1010h2l4 5-3 2v6l3 2-4 5h-2z" />
      <path d="M434 1013v14l-8-7zM436 1013h2.500v14H436zM441 1013h2.500v14H441z" />
      <path d="M459 1013v14l-8-7z" />
      <path d="M465 1016l4 4-4 4-4-4z" fill="none" stroke={c} strokeWidth="1.600" />
      <path d="M485 1013v14l-8-7zM487 1013h2.500v14H487z" />
      <path d="M517 1011v18l-15-9zM531 1011v18l15-9z" />
      <path d="M563.500 1013v14l8-7zM559 1013h2.500v14h-2.500z" />
      <path d="M583 1016l4 4-4 4-4-4z" fill="none" stroke={c} strokeWidth="1.600" />
      <path d="M589.500 1013v14l8-7zM613.500 1013v14l8-7zM603.500 1013h2.500v14h-2.500zM608 1013h2.500v14h-2.500z" />
      <path d="M637 1010h-2l-2 4 2 2v8l-2 2 2 4h2z" />
      <path d="M646 1019h11v-3l5.500 4-5.500 4v-3h-11z" />
    </svg>
  );
}

function Timeline() {
  return (
    <section className="mt-[5px]">
      <div className="flex gap-px pl-[4px]">
        <PanelTab
          label="Timeline"
          icon={
            <svg width="17" height="13" viewBox="0 0 17 13">
              <path d="M1 2l14-1v10L1 12z" fill="#8fa6d6" />
              <path d="M1 3l4-.3M7 2.500l7-.5M1 7l7-.5M10 6.300l5-.3M1 11l3-.2M6 10.500l8-.5" stroke="#eef3ff" strokeWidth="1.800" />
            </svg>
          }
        />
        <PanelTab
          bg="bg-[#2f2f2f]"
          label="Compiler Results"
          icon={
            <svg width="15" height="15" viewBox="0 0 15 15">
              <path d="M2 0h11l1 13-12 2z" fill="#d3def2" />
              <path d="M4 3l4 4-4 4" fill="none" stroke="#27427e" strokeWidth="1.800" />
              <path d="M8 11.500h4" stroke="#27427e" strokeWidth="1.500" />
            </svg>
          }
        />
      </div>
      <div className="flex h-[254px] w-[1625px] flex-col bg-[#3e3e3e] pl-[2px]">
        <div className="flex h-[30px] shrink-0 items-center pl-[12px] pt-[2px]">
          <svg width="18" height="18" viewBox="0 0 18 18">
            <path d="M4 0l1 4-1 2-3-1C.5 8 3 10 6 9l8 8.500c2 1 4-1 3-3L9.500 6.500C10 3 7 .5 4 0z" fill="#e3e3e3" />
            <circle cx="15" cy="15.200" r="1" fill="#444" />
          </svg>
          <span className="ml-[4px]"><Caret /></span>
          <svg width="12" height="14" viewBox="0 0 12 14" className="ml-[21px]"><path d="M0 0l12 7L0 14z" fill="#fff" /></svg>
          <span className="ml-[7px]"><Caret /></span>
          <svg width="12" height="12" className="ml-[19px]" shapeRendering="crispEdges"><rect x="0.500" y="0.500" width="11" height="11" fill="none" stroke="#eee" strokeDasharray="1 1" /></svg>
          <span className="ml-[8px]"><Caret /></span>
          <div className="ml-[9px] h-[25px] w-[2px] bg-[#2c2c2c]" />
          <svg width="22" height="22" viewBox="0 0 22 22" className="ml-[8px]">
            <path d="M11 1l10 10-10 10L1 11z" fill="#fff" />
            <path d="M8 5.500l6 5.500-6 5.500L3.500 11z" fill="#3e3e3e" />
          </svg>
          <span className="ml-[2px]"><Caret /></span>
          <svg width="22" height="22" viewBox="0 0 22 22" className="ml-[16px]">
            <path d="M11 0.500L21.500 11 11 21.500.5 11z" fill="#fff" />
            <circle cx="12" cy="7.500" r="2.600" fill="none" stroke="#3e3e3e" strokeWidth="1.500" />
            <path d="M11 9.500l-2 6M9 15.500l3 .5" stroke="#3e3e3e" strokeWidth="1.500" />
          </svg>
          <div className="ml-[9px] h-[25px] w-[2px] bg-[#2c2c2c]" />
          <div className="ml-[6px] flex h-[28px] w-[32px] items-center justify-center rounded-[2px] bg-[#d9820b]">
            <svg width="20" height="20" viewBox="0 0 20 20">
              <path d="M4 13.500V9.500a6 6 0 0 1 12 0v4" fill="none" stroke="#fff" strokeWidth="5" />
              <path d="M1.500 15h5v4h-5zM13.500 15h5v4h-5z" fill="#fff" />
            </svg>
          </div>
          <span className="ml-[11px]"><Caret /></span>
          <div className="ml-[8px] h-[25px] w-[2px] bg-[#2c2c2c]" />
          <span className="ml-[6px] text-[12px] leading-none text-[#d0d0d0]">30 fps</span>
          <span className="ml-[1px]"><Caret /></span>
          <div className="ml-[7px] h-[25px] w-[2px] bg-[#2c2c2c]" />
          <svg width="23" height="20" viewBox="0 0 23 20" className="ml-[9px]">
            <path d="M1 0v18.500h22" fill="none" stroke="#9a9a9a" strokeWidth="1.600" />
            <path d="M1 9c3-6 6-5 9 0s7 8 12 2" fill="none" stroke="#b5b5b5" strokeWidth="1.500" />
          </svg>
          <div className="flex-1" />
          <svg width="13" height="14" viewBox="0 0 13 14" className="mb-[12px] mr-[10px]">
            <path d="M3 7.500h10V13H3z" fill="#d8d8d8" />
            <path d="M1 7V3c0-3 5-3 5 0v4" fill="none" stroke="#d8d8d8" strokeWidth="1.300" />
            <path d="M8 8.500v3.500" stroke="#333" strokeWidth="1.500" />
          </svg>
        </div>
        <div className="flex h-[222px]">
          <div className="w-[487px]">
            <div className="flex h-[27px] items-center pl-[6px]">
              <GreenButton label="Track" className="w-[65px]" caret />
              <svg width="10" height="10" viewBox="0 0 10 10" className="ml-[6px]">
                <path d="M0 0h10L6 4.500V10L4 8.500v-4z" fill="#e6e6e6" />
              </svg>
              <span className={"ml-[2px] mr-[2px] text-[12px] font-bold leading-none text-[#e6e6e6] " + SHADOW}>Filters</span>
              <Caret className="text-white" />
              <SearchBox text="Search Tracks" className="ml-[7px] w-[298px]" />
              <span className="ml-[9px] text-[12px] leading-none text-[#d9820b]">2.00</span>
            </div>
            <div className="relative flex h-[159px] overflow-hidden">
              <div className="flex w-[481px] flex-col pt-[3px]">
                <TrackRow label="X" indent="pl-[38px]" height="h-[15px]" value />
                <TrackRow label="Y" indent="pl-[38px]" height="h-[15px]" value />
                <div className="flex h-[29px] w-[487px] shrink-0 items-center bg-[#d9820b] pl-[8px] text-[12px] leading-none text-white">
                  <Expander open className="text-black" />
                  <span className="ml-[3px] flex"><WidgetGlyph kind="button" light /></span>
                  <span className="ml-[4px] flex-1 tracking-[0.150px]">Button_924</span>
                  <svg width="11" height="11" viewBox="0 0 11 11" className="mr-[19px]">
                    <path d="M4 0.500h3V4h3.500v3H7v3.500H4V7H.5V4H4z" fill="#000" />
                  </svg>
                </div>
                <TrackRow label="Transform" indent="pl-[18px]" height="h-[23px]" exp="open" plus />
                <TrackRow label="Translation" indent="pl-[28px]" height="h-[19px]" exp="open" />
                <TrackRow label="X" indent="pl-[38px]" height="h-[15px]" value />
                <TrackRow label="Y" indent="pl-[38px]" height="h-[15px]" value />
                <TrackRow label="Rotation" indent="pl-[28px]" height="h-[19px]" exp="closed" />
                <TrackRow label="Scale" indent="pl-[28px] opacity-60" height="h-[20px]" exp="closed" />
              </div>
              <div className="flex w-[6px] flex-col bg-[#428896]">
                <div className="mt-[33px] h-[29px] bg-[#d9820b]" />
              </div>
              <div className="absolute inset-x-0 top-0 h-[4px] bg-linear-to-b from-black/60 to-transparent" />
              <div className="absolute inset-x-0 bottom-0 h-[5px] bg-linear-to-t from-black/60 to-transparent" />
            </div>
            <Transport />
          </div>
          <div className="ml-[4px] w-[1131px]">
            <TimeRuler />
            <TrackArea />
            <div className="h-[2px] bg-[#4a4a4a]" />
            <TimeRuler flip />
          </div>
        </div>
      </div>
    </section>
  );
}

/* ---------- taskbar ---------- */

function TaskSlot({ children, width, active, running }: { children: React.ReactNode; width: string; active?: boolean; running?: boolean }) {
  return (
    <div className={"flex h-[40px] flex-col items-center " + width + " " + (active ? "bg-[#606366]" : "")}>
      <div className="flex h-[38px] items-center pt-[1px]">{children}</div>
      {running && <div className="h-[2px] w-full bg-[#76b9ed]" />}
    </div>
  );
}

function Taskbar() {
  return (
    <footer className="flex h-[40px] shrink-0 bg-[#36393c] font-['Open_Sans'] text-white">
      <div className="flex w-[48px] items-center justify-center">
        <svg width="16" height="16" viewBox="0 0 16 16">
          <path d="M0 2.200l6.500-.9v6.200H0zM7.300 1.200L16 0v7.500H7.300zM0 8.300h6.500v6.300L0 13.700zM7.300 8.300H16V16l-8.700-1.200z" fill="#fff" />
        </svg>
      </div>
      <div className="flex w-[344px] items-center border border-[#6a6c6e] bg-[#323335] pl-[11px] text-[14.500px] text-[#dadada]">
        <svg width="17" height="17" viewBox="0 0 17 17">
          <circle cx="10" cy="6.500" r="5.500" fill="none" stroke="#e6e6e6" strokeWidth="1.300" />
          <path d="M6 10.500L.8 16" stroke="#e6e6e6" strokeWidth="1.300" />
        </svg>
        <span className="ml-[11px] pt-[2px] leading-none tracking-[-0.150px]">Type here to search</span>
      </div>
      <TaskSlot width="w-[48px]">
        <svg width="17" height="17"><circle cx="8.500" cy="8.500" r="6.700" fill="none" stroke="#fff" strokeWidth="2" /></svg>
      </TaskSlot>
      <TaskSlot width="w-[48px]">
        <svg width="17" height="16" viewBox="0 0 17 16" fill="none" stroke="#eee" strokeWidth="1.300">
          <path d="M1 0v2.500h10V0M1 16v-2.500h10V16M1 4.500h10v7H1zM14.500 0v3M14.500 10v6" />
          <rect x="13.500" y="5" width="2.200" height="2.500" fill="#eee" />
        </svg>
      </TaskSlot>
      <TaskSlot width="ml-[7px] w-[40px]" running>
        <svg width="22" height="18" viewBox="0 0 22 18">
          <path d="M0 0h8l2 2h12v16H0z" fill="#f0b93a" />
          <path d="M1 4h20v5H1z" fill="#fbdc7b" />
          <path d="M4 18v-6c0-1 .5-1.500 1.500-1.500h11c1 0 1.500.5 1.500 1.500v6h-4v-3h-6v3z" fill="#3f95d6" />
        </svg>
      </TaskSlot>
      <TaskSlot width="ml-[5px] w-[45px]" active running>
        <div className="flex h-[23px] w-[23px] items-center justify-center rounded-full border-2 border-[#d8d8d8] bg-[#151515]">
          <UnrealU size={16} />
        </div>
      </TaskSlot>
      <div className="ml-px flex w-[2px] flex-col bg-[#56595c]">
        <div className="mt-[38px] h-[2px] bg-[#76b9ed]" />
      </div>
      <TaskSlot width="ml-[5px] w-[40px]" running>
        <svg width="23" height="23" viewBox="0 0 24 24">
          <circle cx="12" cy="12" r="12" fill="#fcc934" />
          <path d="M12 12L1.600 6A12 12 0 0 1 22.400 6H12z" fill="#e04235" />
          <path d="M12 12L1.600 6A12 12 0 0 0 12 24l5-9z" fill="#2fa04f" />
          <path d="M1.600 6A12 12 0 0 1 22.400 6H12a6 6 0 0 0-5.200 9z" fill="#e04235" />
          <circle cx="12" cy="12" r="5.500" fill="#fff" />
          <circle cx="12" cy="12" r="4.300" fill="#4285f4" />
        </svg>
      </TaskSlot>
      <TaskSlot width="ml-[9px] w-[40px]" running>
        <svg width="18" height="24" viewBox="0 0 18 24">
          <rect width="18" height="24" fill="#fff" />
          <rect x="2" y="2.500" width="14" height="3" fill="#222" />
          <path d="M3 9.500h12M3 13.500h12M3 17h12M3 20.500h12" stroke="#222" strokeWidth="2" strokeDasharray="2 1.300" />
        </svg>
      </TaskSlot>
      <div className="flex-1" />
      <div className="flex items-center">
        <svg width="13" height="8" viewBox="0 0 13 8"><path d="M.7 7L6.500 1.200 12.300 7" fill="none" stroke="#fff" strokeWidth="1.400" /></svg>
        <svg width="17" height="14" viewBox="0 0 17 14" className="ml-[9px]" fill="none" stroke="#fff" strokeWidth="1.100">
          <path d="M5 2h11v8H3.500V5M7 13h6M10 10v3" />
          <rect x="0.600" y="0.600" width="4" height="4" />
        </svg>
        <svg width="18" height="14" viewBox="0 0 18 14" className="ml-[6px]" fill="none" stroke="#fff" strokeWidth="1.100">
          <path d="M.6 5v4h2.500L7 12.500v-11L3.100 5zM9.500 5c1 1 1 3 0 4M12 3c2 2 2 6 0 8M14.500 1.500c3 3 3 8 0 11" />
        </svg>
        <div className="ml-[10px] w-[50px] text-center text-[11.500px] leading-[18px] tracking-[-0.250px] whitespace-nowrap">
          6:44 PM
          <br />
          4/1/2020
        </div>
        <svg width="17" height="17" viewBox="0 0 17 17" className="ml-[19px] mr-[19px]">
          <path d="M1 1h15v12h-5l-2.500 3L6 13H1z" fill="none" stroke="#fff" strokeWidth="1.300" />
        </svg>
        <div className="mr-[4px] h-[40px] w-px bg-[#8a8c8e]" />
      </div>
    </footer>
  );
}

export default function App() {
  return (
    <div className="flex h-[1080px] w-[1920px] flex-col overflow-hidden bg-[#222] font-[Roboto,sans-serif]">
      <TitleBar />
      <MenuBar />
      <Toolbar />
      <main className="flex h-[930px] pl-px pt-[5px]">
        <div className="w-[286px] shrink-0">
          <PalettePanel />
          <HierarchyPanel />
          <AnimationsPanel />
        </div>
        <div className="ml-[5px] min-w-0">
          <div className="flex gap-[4px]">
            <Designer />
            <DetailsPanel />
          </div>
          <div className="pl-px">
            <Timeline />
          </div>
        </div>
      </main>
      <Taskbar />
    </div>
  );
}
